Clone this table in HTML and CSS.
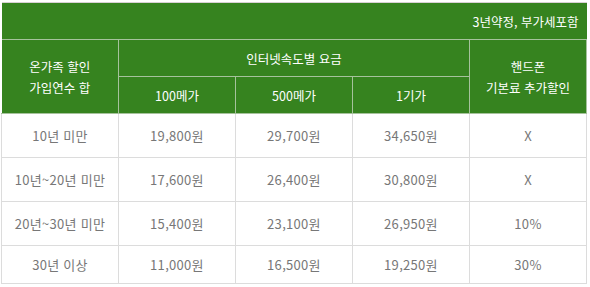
FILE: index.html
```html
<!DOCTYPE html>
<html lang="ko">
<head>
<meta charset="utf-8">
<link rel="stylesheet" href="styles.css">
</head>
<body>
<table class="rates">
  <colgroup>
    <col class="c"><col class="c"><col class="c"><col class="c"><col class="c">
  </colgroup>
  <thead>
    <tr class="top"><th colspan="5" class="note">3년약정, 부가세포함</th></tr>
    <tr class="h1">
      <th rowspan="2">온가족 할인<br>가입연수 합</th>
      <th colspan="3">인터넷속도별 요금</th>
      <th rowspan="2">핸드폰<br>기본료 추가할인</th>
    </tr>
    <tr class="h2"><th>100메가</th><th>500메가</th><th>1기가</th></tr>
  </thead>
  <tbody>
    <tr class="r"><td>10년 미만</td><td>19,800원</td><td>29,700원</td><td>34,650원</td><td>X</td></tr>
    <tr class="r"><td>10년~20년 미만</td><td>17,600원</td><td>26,400원</td><td>30,800원</td><td>X</td></tr>
    <tr class="r"><td>20년~30년 미만</td><td>15,400원</td><td>23,100원</td><td>26,950원</td><td>10%</td></tr>
    <tr class="r last"><td>30년 이상</td><td>11,000원</td><td>16,500원</td><td>19,250원</td><td>30%</td></tr>
  </tbody>
</table>
</body>
</html>
```
FILE: styles.css
```css
html, body { margin: 0; padding: 0; background: #fff; }
body { padding: 2px 0 0 1px; font-family: "Noto Sans CJK KR", "Noto Sans", sans-serif; }
.rates {
  border-collapse: collapse;
  table-layout: fixed;
  width: 586px;
  border-top: 1px solid #d8d0d4;
}
.c { width: 117px; }
.rates th {
  background: #36831f;
  color: #fff;
  font-weight: normal;
  font-size: 12.5px;
  line-height: 21px;
  border: 1px solid #a6c29c;
  padding: 0;
  text-align: center;
}
.rates thead tr.top th { border-top: none; border-left: none; border-right: none; }
.rates th:first-child { border-left: none; }
.top th { height: 36px; }
.note { text-align: right !important; padding-right: 8px !important; }
.h1 th { height: 36px; }
.h2 th { height: 36px; }
.rates td {
  color: #777;
  font-size: 13px;
  letter-spacing: 0.3px;
  text-align: center;
  border: 1px solid #dcdcdc;
  padding: 0;
  height: 43px;
}
.rates tr.last td { height: 37px; }
```
